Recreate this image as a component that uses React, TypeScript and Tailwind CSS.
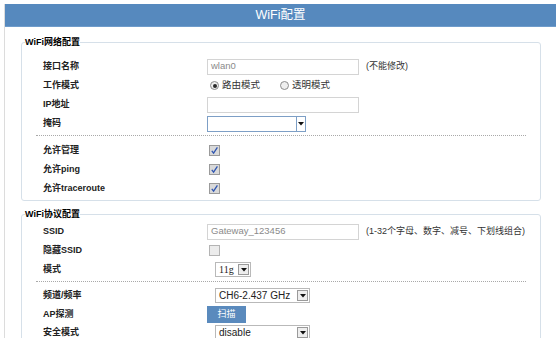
import React from 'react';

const font = "font-['Liberation_Sans','Noto_Sans_CJK_SC',sans-serif]";

function Check({ on }: { on?: boolean }) {
  return (
    <span
      className={`ml-[2px] w-[11px] h-[11px] border flex items-center justify-center ${
        on ? 'border-[#9a9a9a] bg-[#d9d9d9]' : 'border-[#b4b4b4] bg-[#ececec]'
      }`}
    >
      {on && (
        <svg width="9" height="9" viewBox="0 0 9 9">
          <path d="M1.8 4.8 L3.6 7.2 L7.4 1.4" stroke="#2f55b0" strokeWidth="1.3" fill="none" />
        </svg>
      )}
    </span>
  );
}

function Radio({ on, label }: { on?: boolean; label: string }) {
  return (
    <span className="flex items-center">
      <span className="w-[9px] h-[9px] rounded-full border border-[#8c8c8c] bg-[#eeeeee] flex items-center justify-center">
        {on && <span className="w-[4px] h-[4px] rounded-full bg-[#2a2a2a]" />}
      </span>
      <span className="ml-[3px] text-[9.5px] text-[#333]">{label}</span>
    </span>
  );
}

function Arrow() {
  return (
    <svg width="6" height="4" viewBox="0 0 6 4">
      <path d="M0 0 H6 L3 3.5 Z" fill="#111" />
    </svg>
  );
}

// windows classic style select
function Select({ value, width, serif }: { value: string; width: string; serif?: boolean }) {
  return (
    <div className={`ml-[8px] h-[15px] border border-[#b9b9b9] bg-white flex items-center ${width}`}>
      <span
        className={`flex-1 pl-[3px] text-[10px] text-[#222] leading-none ${
          serif ? "font-['Liberation_Serif',serif]" : ''
        }`}
      >
        {value}
      </span>
      <span className="mr-[1px] w-[11px] h-[11px] border border-[#9a9a9a] bg-[#eeeeee] flex items-center justify-center">
        <Arrow />
      </span>
    </div>
  );
}

function Input({ value }: { value?: string }) {
  return (
    <div className="w-[152px] h-[16px] border border-[#d4d4d4] bg-white flex items-center pl-[3px] text-[9.5px] text-[#8a8a8a]">
      {value}
    </div>
  );
}

function Row({ label, h = 'h-[19px]', children }: { label: string; h?: string; children?: React.ReactNode }) {
  return (
    <div className={`grid grid-cols-[164px_1fr] items-center pl-[21px] ${h}`}>
      <span className="text-[9px] font-bold text-[#222] leading-none">{label}</span>
      <div className="flex items-center">{children}</div>
    </div>
  );
}

function Dotted({ gap }: { gap: string }) {
  return <div className={`mx-[14px] mt-[2px] border-t border-dotted border-[#a9a9a9] ${gap}`} />;
}

function Group({ title, top, pt, children }: { title: string; top: string; pt: string; children: React.ReactNode }) {
  return (
    <fieldset className={`ml-[16px] w-[520px] border border-[#d6e0e9] rounded-[3px] ${top}`}>
      <legend className="ml-[3px] text-[9px] font-bold text-black leading-[12px]">{title}</legend>
      <div className={pt}>{children}</div>
    </fieldset>
  );
}

export default function App() {
  return (
    <div className={`w-[557px] h-[338px] overflow-hidden bg-white pl-[4px] pr-[1px] pt-[4px] ${font}`}>
      <div className="h-full border-l border-[#dcdcdc]">
        {/* title bar */}
        <div className="h-[23px] bg-[#5689be] border-b border-[#6f9ccb] flex items-center justify-center text-white text-[12.5px]">
          WiFi配置
        </div>

        <Group title="WiFi网络配置" top="mt-[9px]" pt="pt-[9px] pb-[2px]">
          <Row label="接口名称">
            <Input value="wlan0" />
            <span className="ml-[7px] text-[9px] text-[#333]">(不能修改)</span>
          </Row>
          <Row label="工作模式">
            <span className="ml-[3px] flex items-center gap-[20px]">
              <Radio on label="路由模式" />
              <Radio label="透明模式" />
            </span>
          </Row>
          <Row label="IP地址">
            <Input />
          </Row>
          <Row label="掩码">
            <div className="w-[99px] h-[16px] border border-[#7d9fc6] bg-white flex justify-end">
              <span className="w-[9px] h-full border-l border-[#7d9fc6] flex items-center justify-center">
                <Arrow />
              </span>
            </div>
          </Row>
          <Dotted gap="mb-[5px]" />
          <Row label="允许管理">
            <Check on />
          </Row>
          <Row label="允许ping">
            <Check on />
          </Row>
          <Row label="允许traceroute">
            <Check on />
          </Row>
        </Group>

        <Group title="WiFi协议配置" top="mt-[7px]" pt="pt-[2px]">
          <Row label="SSID">
            <Input value="Gateway_123456" />
            <span className="ml-[7px] text-[9px] text-[#333]">(1-32个字母、数字、减号、下划线组合)</span>
          </Row>
          <Row label="隐藏SSID">
            <Check />
          </Row>
          <Row label="模式">
            <Select value="11g" width="w-[36px]" serif />
          </Row>
          <Dotted gap="mb-[4px]" />
          <Row label="频道/频率">
            <Select value="CH6-2.437 GHz" width="w-[95px]" />
          </Row>
          <Row label="AP探测" h="h-[18px]">
            <button className="w-[39px] h-[17px] bg-[#5a8abd] text-white text-[9px] leading-none">扫描</button>
          </Row>
          <Row label="安全模式">
            <Select value="disable" width="w-[95px]" />
          </Row>
        </Group>
      </div>
    </div>
  );
}
